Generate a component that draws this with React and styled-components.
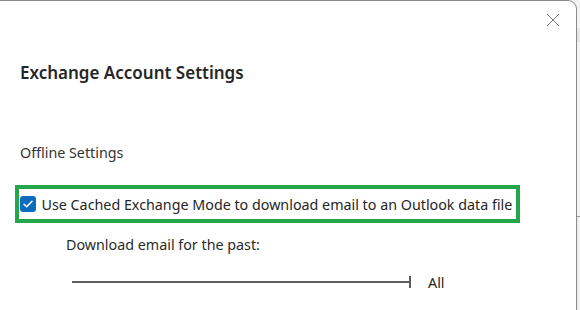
import React from "react";
import styled, { createGlobalStyle } from "styled-components";

const Global = createGlobalStyle`
	html, body {
		margin: 0;
		padding: 0;
		background: #f3f3f3;
	}
	body {
		font-family: "Noto Sans", "Open Sans", sans-serif;
		color: #242424;
	}
`;

const Screen = styled.div`
	display: flex;
	width: 580px;
	height: 310px;
	overflow: hidden;
`;

const Dialog = styled.div`
	width: 577px;
	flex-shrink: 0;
	height: 310px;
	box-sizing: border-box;
	background: #fff;
	border-top: 1.5px solid #8a8a8a;
	border-right: 1.5px solid #8a8a8a;
	border-top-right-radius: 9px;
	padding-left: 20px;
	display: flex;
	flex-direction: column;
`;

const BackWindow = styled.div`
	flex: 1;
	display: flex;
	flex-direction: column;
	padding-top: 28px;
`;

const BackBar = styled.div`
	height: ${(p) => p.h}px;
	background: ${(p) => p.bg};
	border-bottom: ${(p) => (p.line ? "1px solid #9a9a9a" : "none")};
`;

const CloseRow = styled.div`
	height: 37px;
	display: flex;
	justify-content: flex-end;
	align-items: flex-start;
	padding-right: 16px;
	padding-top: 12px;
	box-sizing: border-box;
`;

const CloseButton = styled.button`
	border: none;
	background: none;
	padding: 0;
	width: 14px;
	height: 14px;
	display: flex;
	svg {
		display: block;
	}
`;

const Title = styled.h1`
	margin: 23px 0 0;
	font-size: 17px;
	line-height: 24px;
	font-weight: 600;
	color: #262626;
`;

const Section = styled.h2`
	margin: 58px 0 0;
	font-size: 14.3px;
	line-height: 20px;
	font-weight: 400;
	color: #333;
`;

const Highlight = styled.label`
	margin: 22px 0 0 -5px;
	align-self: flex-start;
	display: flex;
	align-items: center;
	gap: 6px;
	height: 38px;
	box-sizing: border-box;
	border: 4.5px solid #25a64a;
	padding: 0 4px 0 0.5px;
	font-size: 14.3px;
	color: #262626;
`;

const Box = styled.span`
	width: 16px;
	height: 16px;
	border-radius: 3px;
	background: #0f6cbd;
	display: flex;
	align-items: center;
	justify-content: center;
	flex-shrink: 0;
`;

const SubLabel = styled.div`
	margin: 12px 0 0 46px;
	font-size: 14.3px;
	line-height: 20px;
	color: #2b2b2b;
`;

const SliderRow = styled.div`
	margin: 17px 0 0 52px;
	height: 20px;
	display: flex;
	align-items: center;
`;

const Track = styled.div`
	width: 337px;
	height: 2px;
	background: #5c5c5c;
`;

const Tick = styled.div`
	width: 2px;
	height: 12px;
	background: #5c5c5c;
`;

const SliderValue = styled.span`
	margin-left: 17px;
	font-size: 14.3px;
	color: #262626;
`;

export default function App() {
	return (
		<>
			<Global />
			<Screen>
				<Dialog>
					<CloseRow>
						<CloseButton aria-label="Close">
							<svg width="14" height="14" viewBox="0 0 14 14">
								<path d="M1 1L13 13M13 1L1 13" stroke="#7a7a7a" strokeWidth="1" fill="none" />
							</svg>
						</CloseButton>
					</CloseRow>
					<Title>Exchange Account Settings</Title>
					<Section>Offline Settings</Section>
					<Highlight>
						<Box>
							<svg width="10" height="8" viewBox="0 0 10 8">
								<path d="M1 4.2L3.7 6.7L9 1.3" stroke="#fff" strokeWidth="1.5" fill="none" strokeLinecap="round" strokeLinejoin="round" />
							</svg>
						</Box>
						Use Cached Exchange Mode to download email to an Outlook data file
					</Highlight>
					<SubLabel>Download email for the past:</SubLabel>
					<SliderRow>
						<Track />
						<Tick />
						<SliderValue>All</SliderValue>
					</SliderRow>
				</Dialog>
				<BackWindow>
					<BackBar h={14} bg="#e6e6e6" />
					<BackBar h={175} bg="#f3f3f3" line />
					<BackBar h={93} bg="#f0f0f0" />
				</BackWindow>
			</Screen>
		</>
	);
}
